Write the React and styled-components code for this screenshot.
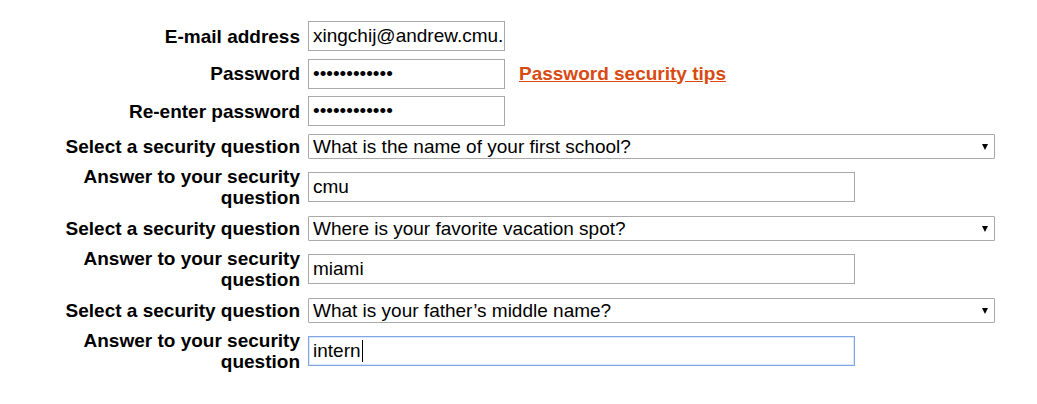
import React from 'react';
import styled, { createGlobalStyle } from 'styled-components';

const GlobalStyle = createGlobalStyle`
  html, body {
    margin: 0;
    padding: 0;
    background: #ffffff;
  }
  body {
    font-family: 'Liberation Sans', Arial, sans-serif;
    color: #000;
  }
`;

const Page = styled.div`
  padding: 21px 0 0 60px;
`;

const Form = styled.form`
  display: flex;
  flex-direction: column;
  gap: 7.5px;
`;

const Row = styled.div`
  display: flex;
  align-items: center;
  gap: 8px;
`;

const Label = styled.label`
  width: 240px;
  flex-shrink: 0;
  text-align: right;
  font-weight: bold;
  font-size: 19px;
  line-height: 21px;
`;

const Field = styled.div`
  display: flex;
  align-items: center;
  gap: 14px;
`;

const TextInput = styled.input`
  box-sizing: border-box;
  width: ${(p) => p.$width}px;
  height: 30px;
  margin: 0;
  padding: 0 1px 0 4px;
  border: 1px solid #a9a9a9;
  border-radius: 0;
  background: #fff;
  font-family: 'Liberation Sans', Arial, sans-serif;
  font-size: 19px;
  color: #000;
  outline: none;
`;

const FocusedBox = styled.div`
  box-sizing: border-box;
  width: ${(p) => p.$width}px;
  height: 30px;
  padding: 0 4px;
  display: flex;
  align-items: center;
  border: 1px solid #7ea6e2;
  box-shadow: inset 0 0 0 1px #dce7f8;
  font-size: 19px;
  color: #000;
`;

const Caret = styled.span`
  display: inline-block;
  width: 1px;
  height: 22px;
  margin-left: 1px;
  background: #000;
`;

const SelectWrap = styled.div`
  position: relative;
  width: 687px;
  height: 25px;

  &::after {
    content: '';
    position: absolute;
    right: 7px;
    top: 10px;
    border-left: 3.5px solid transparent;
    border-right: 3.5px solid transparent;
    border-top: 6px solid #000;
    pointer-events: none;
  }
`;

const Select = styled.select`
  appearance: none;
  -webkit-appearance: none;
  box-sizing: border-box;
  width: 100%;
  height: 100%;
  margin: 0;
  padding: 0 20px 0 4px;
  border: 1px solid #a9a9a9;
  border-radius: 1px;
  background: #fff;
  font-family: 'Liberation Sans', Arial, sans-serif;
  font-size: 19px;
  color: #000;
  outline: none;
`;

const TipsLink = styled.a`
  font-weight: bold;
  font-size: 19px;
  color: #d94a10;
  text-decoration: underline;
`;

const questions = [
  'What is the name of your first school?',
  'Where is your favorite vacation spot?',
  'What is your father\u2019s middle name?',
];

const answers = ['cmu', 'miami', 'intern'];

function App() {
  return (
    <Page>
      <GlobalStyle />
      <Form onSubmit={(e) => e.preventDefault()}>
        <Row>
          <Label>E-mail address</Label>
          <Field>
            <TextInput $width={197} readOnly value="xingchij@andrew.cmu.edu" />
          </Field>
        </Row>
        <Row>
          <Label>Password</Label>
          <Field>
            <TextInput $width={197} type="password" readOnly value="secretpass12" />
            <TipsLink href="#">Password security tips</TipsLink>
          </Field>
        </Row>
        <Row>
          <Label>Re-enter password</Label>
          <Field>
            <TextInput $width={197} type="password" readOnly value="secretpass12" />
          </Field>
        </Row>
        {questions.map((q, i) => (
          <React.Fragment key={q}>
            <Row>
              <Label>Select a security question</Label>
              <SelectWrap>
                <Select defaultValue={q}>
                  {questions.map((o) => (
                    <option key={o}>{o}</option>
                  ))}
                </Select>
              </SelectWrap>
            </Row>
            <Row>
              <Label>Answer to your security question</Label>
              {i === 2 ? (
                <FocusedBox $width={547}>
                  {answers[i]}
                  <Caret />
                </FocusedBox>
              ) : (
                <TextInput $width={547} readOnly value={answers[i]} />
              )}
            </Row>
          </React.Fragment>
        ))}
      </Form>
    </Page>
  );
}

export default App;
